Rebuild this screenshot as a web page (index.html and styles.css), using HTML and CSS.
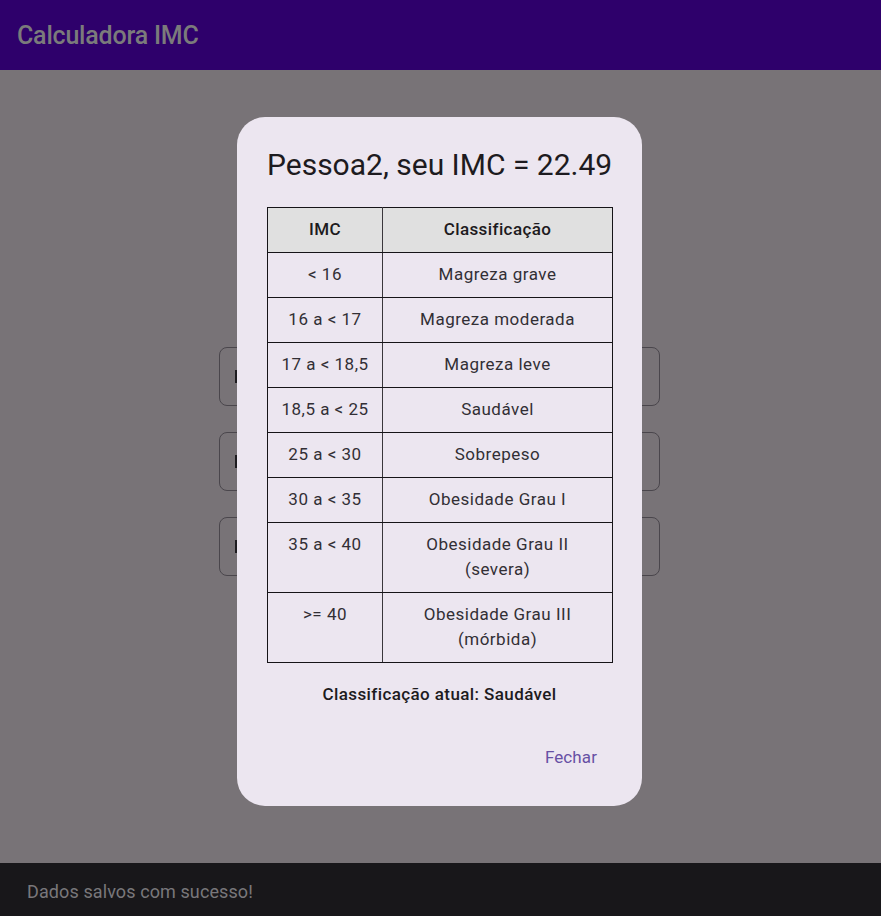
FILE: index.html
```html
<!DOCTYPE html>
<html lang="pt">
<head>
<meta charset="utf-8">
<title>Calculadora IMC</title>
<link rel="stylesheet" href="styles.css">
</head>
<body>
<div class="app">
  <header class="appbar"><h1 class="appbar-title">Calculadora IMC</h1></header>
  <main class="content">
    <div class="fields">
      <div class="field"><span class="field-glyph" aria-hidden="true"></span></div>
      <div class="field"><span class="field-glyph" aria-hidden="true"></span></div>
      <div class="field"><span class="field-glyph" aria-hidden="true"></span></div>
    </div>
  </main>
  <footer class="snackbar">Dados salvos com sucesso!</footer>

  <div class="dialog" role="dialog">
    <h2 class="dialog-title">Pessoa2, seu IMC = 22.49</h2>
    <table class="imc-table">
      <thead>
        <tr><th class="c1">IMC</th><th class="c2">Classificação</th></tr>
      </thead>
      <tbody>
        <tr><td>&lt; 16</td><td>Magreza grave</td></tr>
        <tr><td>16 a &lt; 17</td><td>Magreza moderada</td></tr>
        <tr><td>17 a &lt; 18,5</td><td>Magreza leve</td></tr>
        <tr><td>18,5 a &lt; 25</td><td>Saudável</td></tr>
        <tr><td>25 a &lt; 30</td><td>Sobrepeso</td></tr>
        <tr><td>30 a &lt; 35</td><td>Obesidade Grau I</td></tr>
        <tr class="tall"><td>35 a &lt; 40</td><td>Obesidade Grau II<br>(severa)</td></tr>
        <tr class="tall"><td>&gt;= 40</td><td>Obesidade Grau III<br>(mórbida)</td></tr>
      </tbody>
    </table>
    <p class="current">Classificação atual: Saudável</p>
    <div class="actions"><button class="btn-text">Fechar</button></div>
  </div>
</div>
</body>
</html>
```

FILE: styles.css
```css
* { box-sizing: border-box; }
html, body { margin: 0; padding: 0; }
body {
  font-family: Roboto, "Noto Sans", sans-serif;
  background: #787377;
}
.app {
  position: relative;
  width: 881px;
  height: 916px;
  display: flex;
  flex-direction: column;
  overflow: hidden;
}
.appbar {
  height: 70px;
  flex: 0 0 70px;
  background: #2e006b;
  display: flex;
  align-items: center;
  padding-left: 17px;
}
.appbar-title {
  margin: 0;
  font-size: 25px;
  font-weight: 500;
  color: #7b7b7b;
  letter-spacing: -0.2px;
}
.content {
  flex: 1;
  background: #787377;
  padding: 277px 221px 0 219px;
}
.fields {
  display: flex;
  flex-direction: column;
  gap: 26px;
}
.field {
  height: 59px;
  border: 1px solid #4a464c;
  border-radius: 8px;
  display: flex;
  align-items: center;
  padding-left: 15px;
}
.field-glyph {
  display: block;
  width: 3px;
  height: 13px;
  background: #1e1c20;
}
.snackbar {
  flex: 0 0 53px;
  height: 53px;
  background: #18171a;
  color: #79777b;
  font-size: 18px;
  display: flex;
  align-items: center;
  padding: 3px 0 0 27px;
  letter-spacing: 0.1px;
}
.dialog {
  position: absolute;
  left: 237px;
  top: 117px;
  width: 405px;
  height: 689px;
  background: #ece6f0;
  border-radius: 28px;
  padding: 30px 30px 0 30px;
  display: flex;
  flex-direction: column;
}
.dialog-title {
  margin: 0;
  font-size: 30px;
  line-height: 36px;
  font-weight: 400;
  color: #1d1b20;
  white-space: nowrap;
}
.imc-table {
  margin-top: 24px;
  width: 345px;
  border-collapse: collapse;
  table-layout: fixed;
  font-size: 17px;
  color: #322f35;
  letter-spacing: 0.5px;
}
.imc-table th, .imc-table td {
  border: 1px solid #161418;
  text-align: center;
  vertical-align: top;
  padding: 9px 2px 10px;
  line-height: 25px;
  white-space: nowrap;
}
.imc-table th {
  background: #e0e0e0;
  font-weight: 500;
  color: #1d1b20;
  letter-spacing: 0.4px;
}
.imc-table .c1 { width: 115px; }
.imc-table .c2 { width: 230px; }
.imc-table th.c1, .imc-table td:first-child { border-right-color: #3a373c; }
.current {
  margin: 19px 0 0;
  text-align: center;
  font-size: 17px;
  line-height: 24px;
  font-weight: 500;
  color: #1d1b20;
  letter-spacing: 0.4px;
}
.actions {
  margin-top: 31px;
  display: flex;
  justify-content: flex-end;
  padding-right: 3px;
}
.btn-text {
  background: none;
  border: none;
  height: 40px;
  padding: 0 12px;
  font-family: Roboto, "Noto Sans", sans-serif;
  font-size: 17px;
  color: #6750a4;
  letter-spacing: 0.1px;
  cursor: pointer;
}
```
